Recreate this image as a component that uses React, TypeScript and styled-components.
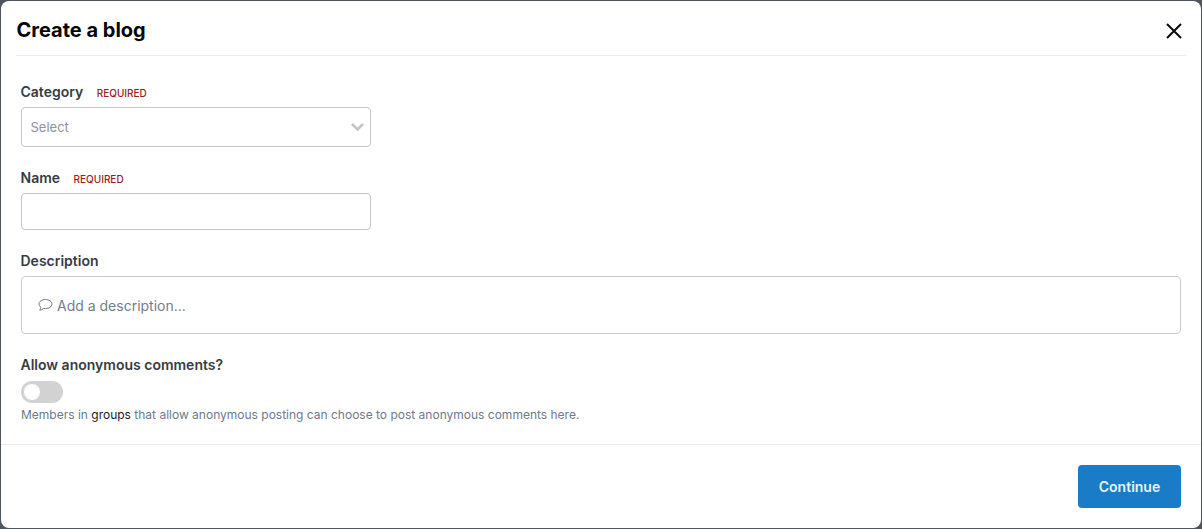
import React from "react";
import styled, { createGlobalStyle } from "styled-components";

const Global = createGlobalStyle`
  html, body { margin: 0; padding: 0; height: 100%; background: #4b5660; }
  * { box-sizing: border-box; }
  #root { height: 529px; padding: 1px; font-family: Inter, "Liberation Sans", sans-serif; }
`;

const Modal = styled.div`
  height: 527px;
  background: #fff;
  border-radius: 8px;
  display: flex;
  flex-direction: column;
`;

const Header = styled.header`
  height: 55px;
  margin: 0 15px;
  flex: none;
  border-bottom: 1px solid #e9ebed;
  display: flex;
  align-items: center;
  justify-content: space-between;
`;

const Title = styled.h1`
  margin: 4px 0 0 0.5px;
  font-size: 20px;
  line-height: 28px;
  font-weight: 700;
  color: #050505;
`;

const CloseButton = styled.button`
  border: 0;
  background: none;
  padding: 0;
  width: 20px;
  height: 20px;
  margin: 6px 2px 0 0;
  display: flex;
`;

const Body = styled.main`
  flex: 1;
  padding: 26px 20px 0;
  display: flex;
  flex-direction: column;
`;

const Field = styled.div<{ $gap: number }>`
  margin-bottom: ${(p) => p.$gap}px;
`;

const LabelRow = styled.div`
  display: flex;
  align-items: center;
  gap: 13.5px;
  height: 20px;
  margin-bottom: 5px;
`;

const Label = styled.label`
  margin-left: -0.5px;
  font-size: 14px;
  line-height: 20px;
  font-weight: 600;
  color: #363c43;
`;

const Required = styled.span`
  font-size: 10px;
  line-height: 14px;
  font-weight: 500;
  color: #9b1c1c;
  margin-top: 2px;
`;

const Select = styled.div`
  width: 350px;
  height: 40px;
  border: 1px solid #c2c6cb;
  border-radius: 4px;
  display: flex;
  align-items: center;
  justify-content: space-between;
  padding: 0 6px 0 8.5px;
  font-size: 13px;
  color: #8f9399;
`;

const Input = styled.input`
  display: block;
  width: 350px;
  height: 37px;
  border: 1px solid #c2c6cb;
  border-radius: 4px;
  background: #fff;
  outline: none;
`;

const Textarea = styled.div`
  height: 58px;
  border: 1px solid #c9cdd1;
  border-radius: 4px;
  padding: 0 16px;
  display: flex;
  align-items: center;
  gap: 4px;
  font-size: 14px;
  color: #737d8a;
`;

const Toggle = styled.div`
  width: 42px;
  height: 22px;
  border-radius: 11px;
  background: #d2d2d2;
  padding: 3px;
  margin-top: 6px;
`;

const Knob = styled.div`
  width: 16px;
  height: 16px;
  border-radius: 50%;
  background: #fff;
`;

const Hint = styled.p`
  margin: 4px 0 0;
  font-size: 12px;
  line-height: 16px;
  color: #6c7a8d;
`;

const HintLink = styled.span`
  color: #17202b;
`;

const Footer = styled.footer`
  flex: none;
  height: 84px;
  border-top: 1px solid #e9ebed;
  display: flex;
  justify-content: flex-end;
  align-items: flex-start;
  padding: 20px 20px 0;
`;

const Primary = styled.button`
  width: 103px;
  height: 43px;
  border: 0;
  border-radius: 4px;
  background: #1a7cc7;
  color: #e8f4fc;
  font-family: inherit;
  font-size: 14px;
  font-weight: 600;
`;

export default function App() {
  return (
    <>
      <Global />
      <Modal>
        <Header>
          <Title>Create a blog</Title>
          <CloseButton aria-label="Close">
            <svg width="20" height="20" viewBox="0 0 20 20" fill="none" stroke="#0a0a0a" strokeWidth="2">
              <path d="M3 3 L17 17 M17 3 L3 17" />
            </svg>
          </CloseButton>
        </Header>
        <Body>
          <Field $gap={21}>
            <LabelRow>
              <Label>Category</Label>
              <Required>REQUIRED</Required>
            </LabelRow>
            <Select>
              Select
              <svg width="13" height="10" viewBox="0 0 13 10" fill="none" stroke="#c4c4c4" strokeWidth="2.6">
                <path d="M1 2 L6.5 7.5 L12 2" />
              </svg>
            </Select>
          </Field>
          <Field $gap={21}>
            <LabelRow>
              <Label>Name</Label>
              <Required>REQUIRED</Required>
            </LabelRow>
            <Input />
          </Field>
          <Field $gap={21}>
            <LabelRow>
              <Label>Description</Label>
            </LabelRow>
            <Textarea>
              <svg width="15" height="14" viewBox="0 0 15 14" fill="none" stroke="#737d8a" strokeWidth="1">
                <path d="M7.5 1.5 C3.9 1.5 1 3.5 1 6 C1 7.3 1.8 8.5 3 9.3 C3 10.4 2.4 11.4 1.6 12.2 C3.2 12.1 4.6 11.5 5.5 10.4 C6.2 10.5 6.8 10.6 7.5 10.6 C11.1 10.6 14 8.6 14 6 C14 3.5 11.1 1.5 7.5 1.5 Z" />
              </svg>
              Add a description...
            </Textarea>
          </Field>
          <Field $gap={0}>
            <LabelRow>
              <Label>Allow anonymous comments?</Label>
            </LabelRow>
            <Toggle>
              <Knob />
            </Toggle>
            <Hint>
              Members in <HintLink>groups</HintLink> that allow anonymous posting can choose to post anonymous comments here.
            </Hint>
          </Field>
        </Body>
        <Footer>
          <Primary>Continue</Primary>
        </Footer>
      </Modal>
    </>
  );
}
